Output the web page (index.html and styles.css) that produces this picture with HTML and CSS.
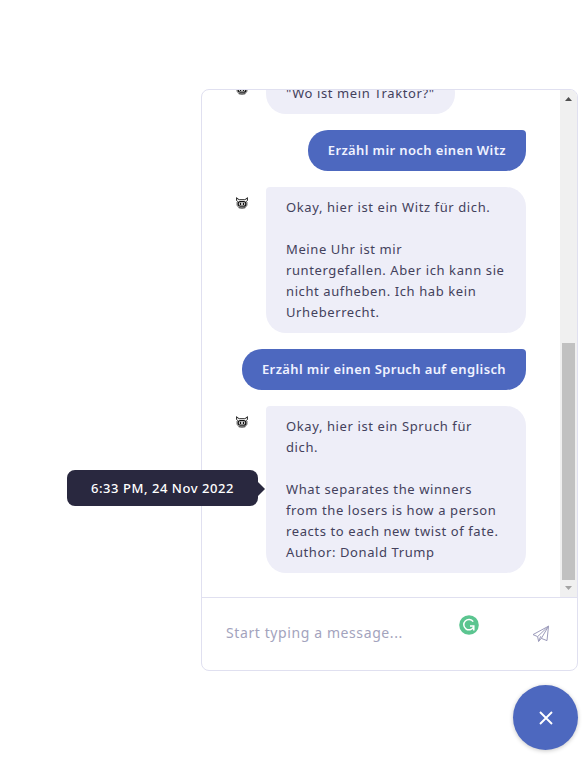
FILE: index.html
```html
<!DOCTYPE html>
<html lang="de">
<head>
<meta charset="utf-8">
<title>Chat</title>
<link rel="stylesheet" href="styles.css">
</head>
<body>
<svg width="0" height="0" class="defs" aria-hidden="true">
  <symbol id="pig" viewBox="0 0 12 12">
    <path d="M.6 .4V3.6L1.8 4.6M11.4 .4V3.6L10.2 4.6M.8 1.2L3.2 2.7H8.8L11.2 1.2" fill="none" stroke="#222" stroke-width="1"/>
    <path d="M1 5V8.2Q2 11.3 6 11.3T11 8.2V5" fill="#eee" stroke="#666" stroke-width=".9"/>
    <rect x="2.2" y="4.6" width="7.6" height="4.6" rx="2" fill="#fff" stroke="#111" stroke-width="1.3"/>
    <path d="M4.5 5.8v2.3M7.5 5.8v2.3" stroke="#111" stroke-width="1.5"/>
    <path d="M2.8 10.8h6.4" stroke="#444" stroke-width=".9"/>
  </symbol>
</svg>
<main class="widget">
  <section class="panel">
    <div class="conversation">
      <div class="messages">
        <div class="row"><svg class="avatar"><use href="#pig"/></svg><div class="bubble bot">"Wo ist mein Traktor?"</div></div>
        <div class="row user-row"><div class="bubble user">Erzähl mir noch einen Witz</div></div>
        <div class="row"><svg class="avatar"><use href="#pig"/></svg><div class="bubble bot">Okay, hier ist ein Witz für dich.<br><br>Meine Uhr ist mir<br>runtergefallen. Aber ich kann sie<br>nicht aufheben. Ich hab kein<br>Urheberrecht.</div></div>
        <div class="row user-row"><div class="bubble user">Erzähl mir einen Spruch auf englisch</div></div>
        <div class="row"><svg class="avatar"><use href="#pig"/></svg><div class="bubble bot">Okay, hier ist ein Spruch für<br>dich.<br><br>What separates the winners<br>from the losers is how a person<br>reacts to each new twist of fate.<br>Author: Donald Trump</div></div>
      </div>
      <div class="scrollbar">
        <svg class="arrow" viewBox="0 0 17 17"><path d="M5 11L8.5 7L12 11Z" fill="#505050"/></svg>
        <div class="thumb"></div>
        <svg class="arrow" viewBox="0 0 17 17"><path d="M5 6L8.5 10L12 6Z" fill="#a3a3a3"/></svg>
      </div>
    </div>
    <div class="composer">
      <span class="placeholder">Start typing a message...</span>
      <svg class="checker" viewBox="0 0 20 20"><circle cx="10" cy="10" r="9.8" fill="#5bc590"/><path d="M14.2 6.6A5.2 5.2 0 1 0 14.6 12M11 11H14.8V15.4" fill="none" stroke="#fff" stroke-width="1.5"/></svg>
      <svg class="send" viewBox="0 0 18 18"><path d="M16.5 1.2L1 9.6L5.6 11.6L6.6 16.4L9.3 13.4L15 15.6ZM16.5 1.2L5.6 11.6M16.5 1.2L9.3 13.4M8.8 11.2L6.6 16.4" fill="none" stroke="#9c9bbb" stroke-width="1" stroke-linejoin="round"/></svg>
    </div>
    <div class="tooltip">6:33 PM, 24 Nov 2022</div>
  </section>
  <button class="close" aria-label="Close"><svg viewBox="0 0 14 14"><path d="M1 1L13 13M13 1L1 13" stroke="#fff" stroke-width="1.9"/></svg></button>
</main>
</body>
</html>
```
FILE: styles.css
```css
* { box-sizing: border-box; }
body { margin: 0; background: #fff; font-family: "Noto Sans", sans-serif; overflow: hidden; }
.defs { position: absolute; }
.widget { display: flex; flex-direction: column; align-items: flex-end; gap: 14px; height: 766px; padding: 89px 10px 0 0; }
.panel { position: relative; width: 377px; height: 582px; border: 1px solid #e0e0f0; border-radius: 8px; display: flex; flex-direction: column; }
.conversation { display: flex; height: 507px; overflow: hidden; border-radius: 7px 7px 0 0; }
.messages { flex: 1; display: flex; flex-direction: column; justify-content: flex-end; gap: 16px; padding: 0 34px 24px 32px; }
.row { display: flex; align-items: flex-start; flex-shrink: 0; }
.user-row { justify-content: flex-end; }
.avatar { width: 12px; height: 12px; margin: 10px 18px 0 2px; flex-shrink: 0; }
.bubble { padding: 10px 20px; font-size: 13px; line-height: 21px; letter-spacing: .6px; white-space: nowrap; }
.bot { background: #eeeef8; color: #43415c; border-radius: 4px 20px 20px 20px; }
.row:nth-child(n+2) .bot { width: 260px; }
.user { background: #4d68bf; color: #f0f2ff; font-weight: 600; letter-spacing: .38px; border-radius: 20px 4px 20px 20px; }
.scrollbar { width: 17px; background: #f0f0f0; display: flex; flex-direction: column; align-items: center; }
.arrow { width: 17px; height: 17px; flex-shrink: 0; }
.thumb { width: 13px; height: 237px; margin-top: auto; background: #c1c1c1; }
.composer { height: 73px; border-top: 1px solid #e0e0f0; display: flex; align-items: center; padding: 0 27px 0 24px; }
.placeholder { flex: 1; color: #a3a3bd; font-size: 14px; line-height: 20px; letter-spacing: .6px; margin-bottom: 2px; }
.checker { width: 20px; height: 20px; margin: 0 53px 19px 0; }
.send { width: 18px; height: 18px; }
.tooltip { position: absolute; left: -135px; top: 380px; width: 191px; height: 36px; border-radius: 8px; background: #29283f; color: #fff; font-size: 13px; line-height: 36px; text-align: center; font-weight: 500; letter-spacing: .55px; white-space: nowrap; }
.tooltip::after { content: ""; position: absolute; left: 191px; top: 12px; border-left: 7px solid #29283f; border-top: 7px solid transparent; border-bottom: 7px solid transparent; }
.close { width: 65px; height: 65px; border: 0; padding: 0; border-radius: 50%; background: #4d68bf; box-shadow: 0 1px 4px rgba(0,0,0,.22); display: flex; align-items: center; justify-content: center; }
.close svg { width: 14px; height: 14px; }
```
